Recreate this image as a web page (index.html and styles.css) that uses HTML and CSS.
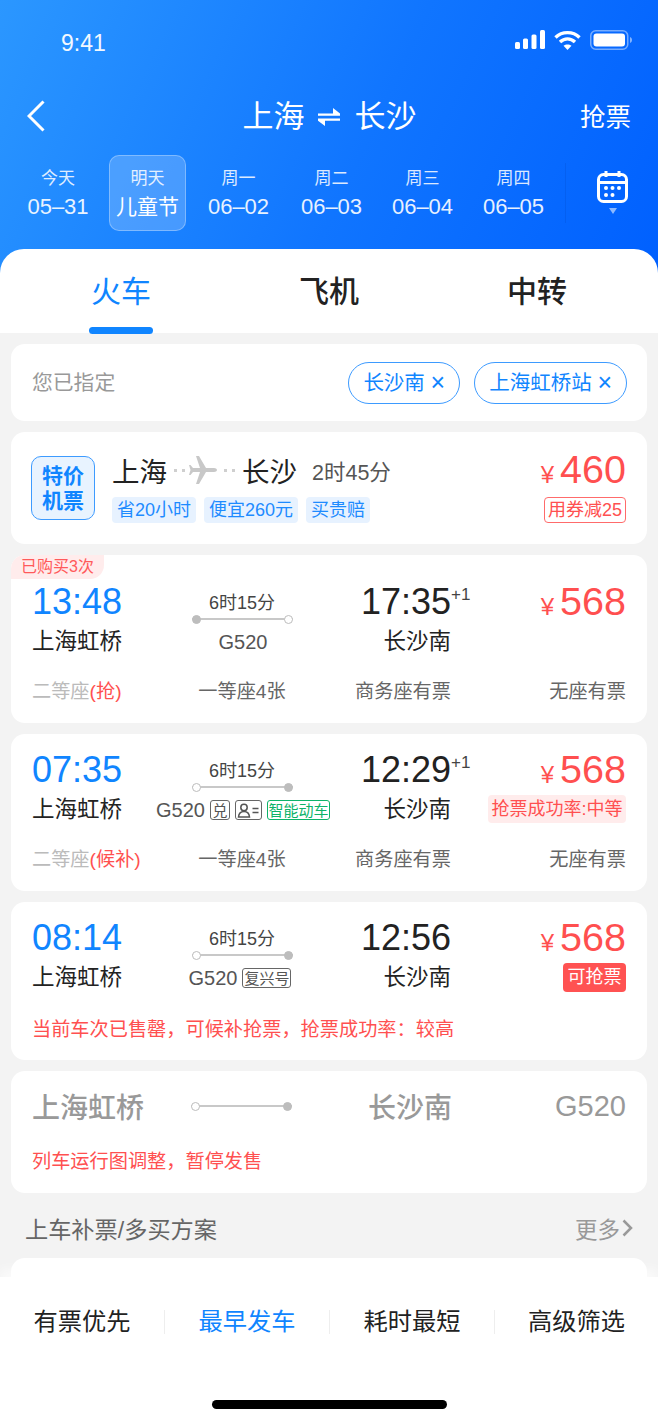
FILE: index.html
```html
<!DOCTYPE html>
<html lang="zh-CN">
<head>
    <meta charset="UTF-8">
    <meta name="viewport" content="width=device-width, initial-scale=1.0">
    <title>上海 - 长沙</title>
    <link rel="stylesheet" href="styles.css">
</head>
<body>
<div class="page">
    <header class="top">
        <div class="status-bar">
            <span class="clock">9:41</span>
            <div class="status-icons">
                <svg width="30" height="19" viewBox="0 0 30 19" fill="#fff"><rect x="0" y="12" width="5" height="7" rx="1.5"/><rect x="8" y="8.500" width="5" height="10.500" rx="1.500"/><rect x="16.500" y="4.500" width="5" height="14.500" rx="1.500"/><rect x="25" y="0" width="5" height="19" rx="1.500"/></svg>
                <svg width="27" height="20" viewBox="0 0 27 20" fill="none" stroke="#fff" stroke-width="3.400"><path d="M1.500 7.500C8 1 19 1 25.500 7.500"/><path d="M6 12C10.500 7.800 16.500 7.800 21 12"/><path d="M13.500 20L9.500 15.800C11.800 14 15.200 14 17.500 15.800Z" fill="#fff" stroke="none"/></svg>
                <svg width="42" height="20" viewBox="0 0 42 20"><rect x="0.750" y="0.750" width="37" height="18.500" rx="5" fill="none" stroke="#fff" stroke-opacity=".45" stroke-width="1.500"/><rect x="3.500" y="3.500" width="31.500" height="13" rx="3" fill="#fff"/><path d="M40 7c1.200.4 2 1.500 2 3s-.8 2.600-2 3z" fill="#fff" fill-opacity=".5"/></svg>
            </div>
        </div>
        <div class="nav">
            <svg class="back" width="18" height="32" viewBox="0 0 18 32" fill="none" stroke="#fff" stroke-width="3"><path d="M16.500 1.500L2 16l14.500 14.500"/></svg>
            <div class="route">
                <span>上海</span>
                <svg width="24" height="18" viewBox="0 0 24 18" fill="#fff"><path d="M1 5.500h22v2.200H1zM23 5.500L16 0v5.500zM1 10.500h22v2.200H1zM1 12.700L8 18v-5.300z"/></svg>
                <span>长沙</span>
            </div>
            <span class="grab">抢票</span>
        </div>
        <div class="dates">
            <div class="date"><span>今天</span><b>05–31</b></div>
            <div class="date date-on"><span>明天</span><b>儿童节</b></div>
            <div class="date"><span>周一</span><b>06–02</b></div>
            <div class="date"><span>周二</span><b>06–03</b></div>
            <div class="date"><span>周三</span><b>06–04</b></div>
            <div class="date"><span>周四</span><b>06–05</b></div>
            <div class="calendar">
                <svg width="31" height="33" viewBox="0 0 31 33" fill="none" stroke="#fff" stroke-width="3"><rect x="1.500" y="4.500" width="28" height="27" rx="5"/><path d="M1.500 12.500h28M9 1v6M22 1v6"/><g fill="#fff" stroke="none"><circle cx="9" cy="18" r="2"/><circle cx="15.500" cy="18" r="2"/><circle cx="22" cy="18" r="2"/><circle cx="9" cy="25" r="2"/><circle cx="15.500" cy="25" r="2"/></g></svg>
                <i class="calendar-arrow"></i>
            </div>
        </div>
    </header>

    <nav class="tabs">
        <div class="tab tab-on">火车</div>
        <div class="tab">飞机</div>
        <div class="tab">中转</div>
    </nav>

    <main class="list">
        <section class="card picked">
            <span class="picked-label">您已指定</span>
            <div class="chips">
                <span class="chip">长沙南 <i>×</i></span>
                <span class="chip">上海虹桥站 <i>×</i></span>
            </div>
        </section>

        <section class="card flight">
            <div class="flight-badge">特价<br>机票</div>
            <div class="flight-info">
                <div class="flight-route">
                    <span class="flight-city">上海</span>
                    <span class="dots"></span>
                    <svg width="28" height="28" viewBox="0 0 28 28" fill="#c8c8c8"><path d="M28 14c0-1.200-1.500-2-3-2h-8L10 0H7l4 12H4L1.500 9H0l1.500 5L0 19h1.500L4 16h7L7 28h3l7-12h8c1.500 0 3-.8 3-2z"/></svg>
                    <span class="dots dots-after"></span>
                    <span class="flight-city">长沙</span>
                    <span class="flight-time">2时45分</span>
                </div>
                <div class="flight-tags">
                    <span class="tag">省20小时</span>
                    <span class="tag">便宜260元</span>
                    <span class="tag">买贵赔</span>
                </div>
            </div>
            <div class="flight-price">
                <div class="price"><small>¥</small>460</div>
                <span class="coupon">用券减25</span>
            </div>
        </section>

        <section class="card train train-bought">
            <span class="bought">已购买3次</span>
            <div class="train-grid">
                <div class="time depart">13:48</div>
                <div class="trip">
                    <span class="duration">6时15分</span>
                    <div class="line"><i class="dot dot-full"></i><i class="dot"></i></div>
                </div>
                <div class="time arrive">17:35<sup>+1</sup></div>
                <div class="price"><small>¥</small>568</div>
                <div class="station">上海虹桥</div>
                <div class="train-no"><span>G520</span></div>
                <div class="station arrive">长沙南</div>
                <div class="note"></div>
                <div class="seat"><em>二等座</em><u>(抢)</u></div>
                <div class="seat seat-mid">一等座4张</div>
                <div class="seat seat-end">商务座有票</div>
                <div class="seat seat-end">无座有票</div>
            </div>
        </section>

        <section class="card train">
            <div class="train-grid">
                <div class="time depart">07:35</div>
                <div class="trip">
                    <span class="duration">6时15分</span>
                    <div class="line"><i class="dot"></i><i class="dot dot-full"></i></div>
                </div>
                <div class="time arrive">12:29<sup>+1</sup></div>
                <div class="price"><small>¥</small>568</div>
                <div class="station">上海虹桥</div>
                <div class="train-no">
                    <span>G520</span>
                    <span class="mark mark-sq">兑</span>
                    <span class="mark mark-id">
                        <svg width="23" height="15" viewBox="0 0 23 15" fill="none" stroke="#555" stroke-width="1.500"><circle cx="7" cy="4.500" r="3.200"/><path d="M1.500 14c.3-3.500 2.500-5.500 5.500-5.500s5.200 2 5.500 5.500z"/><path d="M15.500 5.500h6M15.500 9.500h6"/></svg>
                    </span>
                    <span class="mark mark-green">智能动车</span>
                </div>
                <div class="station arrive">长沙南</div>
                <div class="note"><span class="note-soft">抢票成功率:中等</span></div>
                <div class="seat"><em>二等座</em><u>(候补)</u></div>
                <div class="seat seat-mid">一等座4张</div>
                <div class="seat seat-end">商务座有票</div>
                <div class="seat seat-end">无座有票</div>
            </div>
        </section>

        <section class="card train train-soldout">
            <div class="train-grid">
                <div class="time depart">08:14</div>
                <div class="trip">
                    <span class="duration">6时15分</span>
                    <div class="line"><i class="dot"></i><i class="dot dot-full"></i></div>
                </div>
                <div class="time arrive">12:56</div>
                <div class="price"><small>¥</small>568</div>
                <div class="station">上海虹桥</div>
                <div class="train-no">
                    <span>G520</span>
                    <span class="mark mark-fx">复兴号</span>
                </div>
                <div class="station arrive">长沙南</div>
                <div class="note"><span class="note-solid">可抢票</span></div>
                <div class="message">当前车次已售罄&#xFF0C;可候补抢票&#xFF0C;抢票成功率&#xFF1A;较高</div>
            </div>
        </section>

        <section class="card stopped">
            <div class="stopped-row">
                <span class="stopped-from">上海虹桥</span>
                <div class="line"><i class="dot"></i><i class="dot dot-full"></i></div>
                <span class="stopped-to">长沙南</span>
                <span class="stopped-no">G520</span>
            </div>
            <div class="message">列车运行图调整&#xFF0C;暂停发售</div>
        </section>

        <div class="section-head">
            <span class="section-title">上车补票/多买方案</span>
            <span class="more">更多
                <svg width="11" height="18" viewBox="0 0 11 18" fill="none" stroke="#999" stroke-width="2.500"><path d="M1.500 1.500L9 9l-7.500 7.500"/></svg>
            </span>
        </div>
        <section class="card peek"></section>
    </main>

    <footer class="bottom">
        <div class="sorts">
            <div class="sort">有票优先</div>
            <div class="sort sort-on">最早发车</div>
            <div class="sort">耗时最短</div>
            <div class="sort">高级筛选</div>
        </div>
        <div class="home-bar"></div>
    </footer>
</div>
</body>
</html>
```

FILE: styles.css
```css
* {
    margin: 0;
    padding: 0;
    box-sizing: border-box;
}

body {
    font-family: "Liberation Sans", "Noto Sans CJK SC", sans-serif;
    color: #222;
}

.page {
    width: 658px;
    height: 1425px;
    overflow: hidden;
    display: flex;
    flex-direction: column;
    background: #f3f3f3;
}

/* top blue area */
.top {
    height: 273px;
    margin-bottom: -24px;
    flex-shrink: 0;
    color: #fff;
    background: linear-gradient(115deg, #2b97ff 0%, #1075ff 55%, #0060ff 100%);
}

.status-bar {
    height: 86px;
    padding: 30px 26px 0 61px;
    display: flex;
    justify-content: space-between;
}

.clock {
    font-size: 23px;
    line-height: 27px;
    color: #f2f8ff;
}

.status-icons {
    display: flex;
    gap: 9px;
    height: 20px;
}

.nav {
    height: 60px;
    padding: 0 27px;
    display: flex;
    align-items: center;
    justify-content: space-between;
}

.route {
    display: flex;
    align-items: center;
    gap: 13px;
    margin-left: 34px;
    font-size: 31px;
    line-height: 40px;
    padding-top: 1px;
}

.grab {
    font-size: 25.500px;
    line-height: 36px;
    padding-top: 1px;
}

.dates {
    height: 76px;
    margin-top: 9px;
    padding-left: 19.5px;
    display: flex;
    gap: 14px;
}

.date {
    width: 77px;
    padding-top: 4px;
    display: flex;
    flex-direction: column;
    align-items: center;
    justify-content: center;
    white-space: nowrap;
}

.date span {
    font-size: 17px;
    line-height: 24px;
    opacity: .85;
}

.date b {
    font-size: 22px;
    font-weight: 400;
    line-height: 32px;
    opacity: .9;
}

.date-on {
    margin-left: -1.500px;
    background: rgba(255, 255, 255, .2);
    border: 1px solid rgba(255, 255, 255, .3);
    border-radius: 10px;
}

.date-on b {
    opacity: 1;
    font-size: 21px;
}

.date:nth-child(4) {
    margin-left: 2px;
}

.calendar {
    margin-left: -1px;
    padding-left: 31px;
    height: 60px;
    margin-top: 8px;
    border-left: 1px solid rgba(0, 70, 200, .25);
    display: flex;
    flex-direction: column;
    align-items: center;
    gap: 5px;
    padding-top: 7px;
}

.calendar-arrow {
    border-left: 4px solid transparent;
    border-right: 4px solid transparent;
    border-top: 6px solid rgba(255, 255, 255, .55);
}

/* train / flight / transfer tabs */
.tabs {
    height: 84px;
    flex-shrink: 0;
    padding: 0 17px;
    display: grid;
    grid-template-columns: repeat(3, 1fr);
    background: #fff;
    border-radius: 24px 24px 0 0;
    position: relative;
}

.tab {
    text-align: center;
    font-size: 30px;
    font-weight: 500;
    line-height: 85px;
    position: relative;
}

.tab-on {
    color: #1085ff;
    font-weight: 400;
}

.tab-on::after {
    content: "";
    position: absolute;
    left: 72px;
    right: 72px;
    bottom: 0;
    height: 7px;
    border-radius: 4px;
    background: #1085ff;
}

/* list */
.list {
    flex: 1;
    min-height: 0;
    overflow: hidden;
    padding: 11px 11px 0;
    display: flex;
    flex-direction: column;
    gap: 11px;
}

.card {
    flex-shrink: 0;
    background: #fff;
    border-radius: 14px;
    position: relative;
}

.picked {
    height: 77px;
    padding: 0 21px;
    display: flex;
    align-items: center;
    justify-content: space-between;
}

.picked-label {
    font-size: 20.800px;
    line-height: 30px;
    color: #999;
}

.chips {
    display: flex;
    gap: 14px;
    margin-right: -1px;
}

.chip {
    height: 42px;
    padding: 0 14px;
    border: 1px solid #3d9bff;
    border-radius: 21px;
    font-size: 20.500px;
    line-height: 40px;
    color: #1085ff;
    white-space: nowrap;
}

.chip i {
    font-style: normal;
    font-size: 25px;
    line-height: 38px;
    vertical-align: -1px;
}

.flight {
    height: 112px;
    padding: 24px 21px 0 20px;
    display: flex;
}

.flight-badge {
    width: 64px;
    height: 64px;
    padding-top: 6px;
    border: 1px solid #3d9bff;
    border-radius: 10px;
    background: #e8f3ff;
    color: #1085ff;
    font-size: 21px;
    font-weight: 700;
    line-height: 25px;
    text-align: center;
}

.flight-info {
    margin-left: 17px;
}

.flight-route {
    height: 28px;
    display: flex;
    align-items: center;
}

.flight-city {
    font-size: 27.500px;
}

.dots {
    width: 11px;
    height: 3px;
    margin: 0 4px 0 7px;
    background: radial-gradient(circle at 1.500px 1.500px, #cfcfcf 1.500px, transparent 1.600px) 0 0 / 8px 3px repeat-x;
}

.dots-after {
    margin-right: 7px;
}

.flight-time {
    margin-left: 15px;
    font-size: 21.500px;
    color: #555;
}

.flight-tags {
    margin-top: 13px;
    display: flex;
    gap: 8px;
}

.tag {
    height: 26px;
    padding: 0 5px;
    border-radius: 4px;
    background: #e7f2ff;
    color: #1e8bff;
    font-size: 18px;
    line-height: 26px;
    white-space: nowrap;
}

.flight-price {
    margin-left: auto;
    margin-top: -7px;
    display: flex;
    flex-direction: column;
    align-items: flex-end;
}

.price {
    height: 40px;
    color: #ff4f4f;
    font-size: 39.500px;
    line-height: 40px;
    text-align: right;
    white-space: nowrap;
}

.train-grid .price {
    margin-top: -3px;
}

.price small {
    font-size: 24px;
    line-height: 1;
    margin-right: 6px;
}

.coupon {
    margin-top: 8px;
    height: 26px;
    padding: 0 3px;
    border: 1px solid #ff6b6b;
    border-radius: 4px;
    color: #ff5050;
    font-size: 18px;
    line-height: 24px;
    white-space: nowrap;
}

/* train cards */
.train {
    padding: 16px 21px 19px;
}

.train-bought {
    padding-top: 27px;
}

.train-soldout {
    padding-bottom: 18px;
}

.bought {
    position: absolute;
    left: 0;
    top: 0;
    height: 24px;
    padding: 0 10px;
    border-radius: 14px 0 14px 0;
    background: #ffecec;
    color: #ff5a5a;
    font-size: 16px;
    line-height: 24px;
}

.train-grid {
    display: grid;
    grid-template-columns: 118px 184px 117px 1fr;
    grid-template-rows: 40px 38px 44px;
    align-items: center;
}

.train-soldout .train-grid {
    grid-template-rows: 40px 38px 46px;
}

.time {
    font-size: 36px;
    line-height: 40px;
    white-space: nowrap;
}

.depart {
    color: #1085ff;
}

.arrive {
    text-align: right;
}

.time sup {
    display: inline-block;
    width: 19px;
    margin-right: -19px;
    font-size: 17px;
    line-height: 18px;
    vertical-align: 14px;
    text-align: left;
    color: #444;
}

.trip {
    height: 40px;
    display: flex;
    flex-direction: column;
    align-items: center;
    justify-content: flex-end;
}

.duration {
    font-size: 18px;
    line-height: 26px;
    margin-bottom: 2px;
    color: #444;
}

.line {
    width: 101px;
    height: 2px;
    margin-bottom: 2px;
    background: #c8c8c8;
    display: flex;
    align-items: center;
    justify-content: space-between;
}

.dot {
    width: 9px;
    height: 9px;
    flex-shrink: 0;
    border: 1px solid #bdbdbd;
    border-radius: 50%;
    background: #fff;
}

.dot-full {
    background: #bdbdbd;
}

.station {
    padding-top: 2px;
    font-size: 22.500px;
    line-height: 30px;
    white-space: nowrap;
}

.train-no {
    padding: 2px 0 0 2px;
    display: flex;
    justify-content: center;
    align-items: center;
    gap: 5px;
    font-size: 20px;
    color: #555;
    white-space: nowrap;
}

.mark {
    height: 20px;
    border: 1px solid #666;
    border-radius: 3px;
    display: flex;
    align-items: center;
    justify-content: center;
    font-size: 15px;
    line-height: 1;
}

.mark-sq {
    width: 20px;
}

.mark-id {
    width: 27px;
}

.mark-green {
    width: 63px;
    border-color: #0db36a;
    color: #0db36a;
}

.mark-fx {
    width: 49px;
    margin-right: 6px;
}

.note {
    justify-self: end;
}

.note-soft {
    display: block;
    height: 28px;
    padding: 0 3.500px;
    border-radius: 4px;
    background: #ffecec;
    color: #ff5050;
    font-size: 18px;
    line-height: 28px;
    white-space: nowrap;
}

.note-solid {
    display: block;
    height: 29px;
    padding: 0 4.500px;
    border-radius: 4px;
    background: #ff5252;
    color: #fff;
    font-size: 18px;
    line-height: 29px;
    white-space: nowrap;
}

.seat {
    align-self: end;
    font-size: 19.200px;
    line-height: 24px;
    color: #666;
    white-space: nowrap;
}

.seat em {
    font-style: normal;
    color: #bbb;
}

.seat u {
    text-decoration: none;
    color: #ff5050;
}

.seat-mid {
    text-align: center;
}

.seat-end {
    text-align: right;
}

.message {
    grid-column: 1 / -1;
    align-self: end;
    font-size: 19.200px;
    line-height: 24px;
    color: #ff5050;
    white-space: nowrap;
}

/* sold out card */
.stopped {
    height: 122px;
    padding: 17px 21px 0;
}

.stopped-row {
    height: 36px;
    display: flex;
    align-items: center;
    color: #999;
    font-size: 28px;
    font-weight: 500;
    white-space: nowrap;
}

.stopped-row .line {
    margin: 0 0 0 47px;
}

.stopped-to {
    margin-left: 76px;
}

.stopped-no {
    margin-left: auto;
    font-weight: 400;
    font-size: 29px;
}

.stopped .message {
    margin-top: 26px;
}

.section-head {
    margin: 9px 0 0;
    padding: 0 14px;
    height: 30px;
    flex-shrink: 0;
    display: flex;
    justify-content: space-between;
    align-items: center;
}

.section-title {
    font-size: 23.200px;
    color: #666;
}

.more {
    display: flex;
    align-items: center;
    gap: 2px;
    font-size: 22.500px;
    color: #999;
}

.peek {
    height: 60px;
    margin-top: 4px;
}

/* bottom bar */
.bottom {
    height: 148px;
    flex-shrink: 0;
    background: #fff;
    position: relative;
    box-shadow: 0 -8px 10px rgba(255, 255, 255, .6);
}

.sorts {
    padding-top: 33px;
    display: grid;
    grid-template-columns: 165px 165px 165px 163px;
}

.sort {
    height: 24px;
    font-size: 24.250px;
    line-height: 24px;
    text-align: center;
    border-right: 1px solid #eee;
}

.sort:last-child {
    border-right: 0;
}

.sort-on {
    color: #1085ff;
}

.home-bar {
    width: 235px;
    height: 9px;
    margin: 66px auto 0;
    border-radius: 5px;
    background: #000;
}
```
